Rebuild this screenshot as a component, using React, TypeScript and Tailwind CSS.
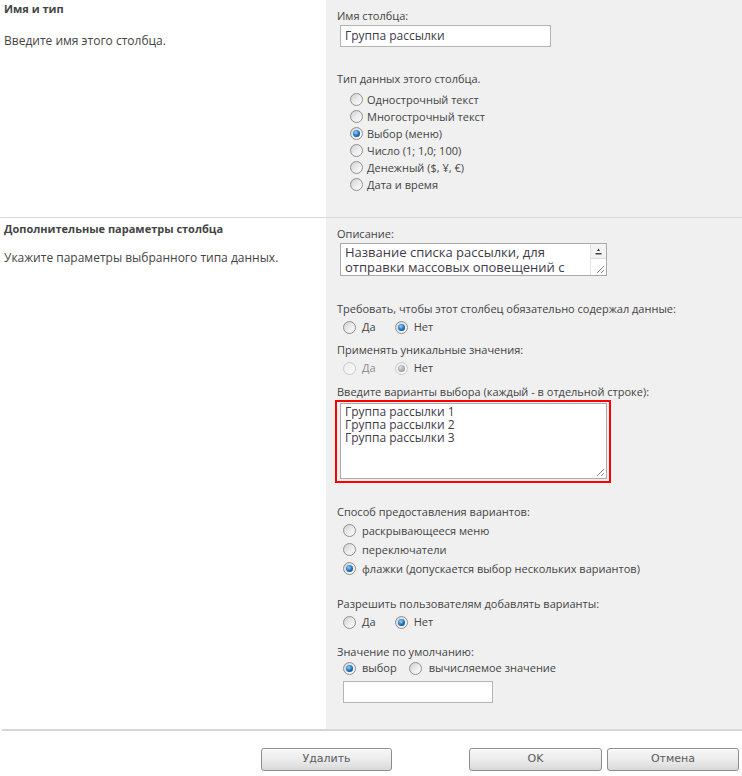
import React from "react";

function Radio({ checked = false, disabled = false }: { checked?: boolean; disabled?: boolean }) {
  return (
    <span
      className={
        "flex h-[13px] w-[13px] shrink-0 items-center justify-center rounded-full border " +
        (disabled
          ? "border-[#c9c9c9] bg-gradient-to-br from-[#ececec] to-[#fbfbfb]"
          : "border-[#8e8f8f] bg-gradient-to-br from-[#cfcfcf] via-[#ebebeb] to-[#fdfdfd]")
      }
    >
      {checked && (
        <span
          className={
            "block h-[7px] w-[7px] rounded-full " +
            (disabled
              ? "bg-[radial-gradient(circle_at_40%_35%,#e0e0e0,#9a9a9a_70%)]"
              : "bg-[radial-gradient(circle_at_40%_35%,#8fd4ff,#1c6bb5_55%,#0b3a74)]")
          }
        />
      )}
    </span>
  );
}

function Label({ children, className = "" }: { children: React.ReactNode; className?: string }) {
  return <div className={"h-[17px] leading-[17px] whitespace-nowrap " + className}>{children}</div>;
}

function Button({ children, className = "" }: { children: React.ReactNode; className?: string }) {
  return (
    <div
      className={
        "flex h-[23px] items-center justify-center rounded-[3px] border border-[#8d8d8d] bg-gradient-to-b from-[#f7f7f7] via-[#ececec] to-[#d9d9d9] font-['DejaVu_Sans',sans-serif] text-[11px] text-[#5a5a5a] shadow-[inset_0_1px_0_#ffffff] " +
        className
      }
    >
      {children}
    </div>
  );
}

export default function App() {
  return (
    <div className="h-[776px] w-[742px] bg-white font-['Open_Sans',sans-serif] text-[11px] text-[#444]">
      {/* Section 1 */}
      <div className="flex h-[217px]">
        <div className="w-[326px] pl-[4px]">
          <Label className="font-bold">Имя и тип</Label>
          <Label className="mt-[15px] text-[12px]">Введите имя этого столбца.</Label>
        </div>
        <div className="flex-1 bg-[#f0f0f0] pl-[11px] pt-[7px]">
          <Label>Имя столбца:</Label>
          <div className="ml-[3px] mt-[1px] flex h-[22px] w-[211px] items-center border border-[#b4b4b4] bg-white pl-[4px] text-[12px] text-[#3e3a48]">
            Группа рассылки
          </div>
          <Label className="mt-[23px]">Тип данных этого столбца.</Label>
          <div className="ml-[13px] mt-[4px] flex flex-col">
            {[
              ["Однострочный текст", false],
              ["Многострочный текст", false],
              ["Выбор (меню)", true],
              ["Число (1; 1,0; 100)", false],
              ["Денежный ($, ¥, €)", false],
              ["Дата и время", false],
            ].map(([t, c]) => (
              <div key={t as string} className="flex h-[17px] items-center gap-[4px]">
                <Radio checked={c as boolean} />
                <span className="leading-[17px]">{t as string}</span>
              </div>
            ))}
          </div>
        </div>
      </div>

      {/* Section 2 */}
      <div className="flex h-[512px] border-t border-[#d9d9d9]">
        <div className="w-[326px] pl-[4px] pt-[2px]">
          <Label className="font-bold">Дополнительные параметры столбца</Label>
          <Label className="mt-[12px] text-[12px]">Укажите параметры выбранного типа данных.</Label>
        </div>
        <div className="flex-1 bg-[#f0f0f0] pl-[11px] pt-[7px]">
          <Label>Описание:</Label>
          <div className="ml-[3px] mt-[1px] flex h-[33px] w-[267px] overflow-hidden border border-[#aaaaaa] bg-white">
            <div className="h-[31px] flex-1 overflow-hidden pl-[4px] pt-[1px] text-[13px] leading-[15px] text-[#3e3a48]">
              Название списка рассылки, для отправки массовых оповещений с сотрудников организаций
            </div>
            <div className="flex w-[16px] flex-col border-l border-[#e3e3e3] bg-[#f3f3f3]">
              <div className="flex h-[15px] flex-col items-center justify-center border-b border-[#dcdcdc]">
                <svg width="7" height="8" viewBox="0 0 7 8">
                  <path d="M3.5 1.5 L5 4 L2 4 Z" fill="#333" />
                  <rect x="0.5" y="6" width="6" height="1.5" fill="#444" />
                </svg>
              </div>
              <div className="relative flex-1 bg-white">
                <svg className="absolute bottom-[1px] right-[1px]" width="9" height="9" viewBox="0 0 9 9">
                  <path d="M8 1 L1 8 M8 5 L5 8" stroke="#888" strokeWidth="1" />
                </svg>
              </div>
            </div>
          </div>

          <Label className="mt-[24px]">Требовать, чтобы этот столбец обязательно содержал данные:</Label>
          <div className="ml-[6px] mt-[2px] flex h-[17px] items-center">
            <Radio />
            <span className="ml-[6px]">Да</span>
            <span className="ml-[19px]">
              <Radio checked />
            </span>
            <span className="ml-[6px]">Нет</span>
          </div>

          <Label className="mt-[5px]">Применять уникальные значения:</Label>
          <div className="ml-[6px] mt-[2px] flex h-[17px] items-center">
            <Radio disabled />
            <span className="ml-[6px] text-[#8a8a8a]">Да</span>
            <span className="ml-[19px]">
              <Radio checked disabled />
            </span>
            <span className="ml-[6px]">Нет</span>
          </div>

          <Label className="mt-[6px]">Введите варианты выбора (каждый - в отдельной строке):</Label>
          <div className="-ml-[2px] w-[276px] border-2 border-[#ff0000] pb-[2px] pl-[3px] pr-[4px] pt-[1px]">
            <div className="relative h-[76px] w-[267px] border border-[#aaaaaa] bg-white pl-[4px] pt-[1px] text-[12px] leading-[13px] text-[#3e3a48]">
              <div className="h-[13px]">Группа рассылки 1</div>
              <div className="h-[13px]">Группа рассылки 2</div>
              <div className="h-[13px]">Группа рассылки 3</div>
              <svg className="absolute bottom-[1px] right-[1px]" width="9" height="9" viewBox="0 0 9 9">
                <path d="M8 1 L1 8 M8 5 L5 8" stroke="#888" strokeWidth="1" />
              </svg>
            </div>
          </div>

          <Label className="mt-[20px]">Способ предоставления вариантов:</Label>
          <div className="ml-[6px] mt-[1px] flex flex-col">
            {[
              ["раскрывающееся меню", false],
              ["переключатели", false],
              ["флажки (допускается выбор нескольких вариантов)", true],
            ].map(([t, c]) => (
              <div key={t as string} className="flex h-[19px] items-center gap-[6px]">
                <Radio checked={c as boolean} />
                <span className="leading-[19px]">{t as string}</span>
              </div>
            ))}
          </div>

          <Label className="mt-[17px]">Разрешить пользователям добавлять варианты:</Label>
          <div className="ml-[6px] mt-[2px] flex h-[17px] items-center">
            <Radio />
            <span className="ml-[6px]">Да</span>
            <span className="ml-[19px]">
              <Radio checked />
            </span>
            <span className="ml-[6px]">Нет</span>
          </div>

          <Label className="mt-[12px]">Значение по умолчанию:</Label>
          <div className="ml-[6px] flex h-[17px] items-center">
            <Radio checked />
            <span className="ml-[6px]">выбор</span>
            <span className="ml-[12px]">
              <Radio />
            </span>
            <span className="ml-[7px]">вычисляемое значение</span>
          </div>
          <div className="ml-[6px] mt-[4px] h-[22px] w-[150px] border border-[#b4b4b4] bg-white" />
        </div>
      </div>

      <div className="ml-[2px] h-[2px] bg-[#d6d6d6]" />

      <div className="mt-[17px] flex">
        <Button className="ml-[261px] w-[131px]">Удалить</Button>
        <Button className="ml-[77px] w-[133px]">OK</Button>
        <Button className="ml-[5px] w-[132px]">Отмена</Button>
      </div>
    </div>
  );
}
